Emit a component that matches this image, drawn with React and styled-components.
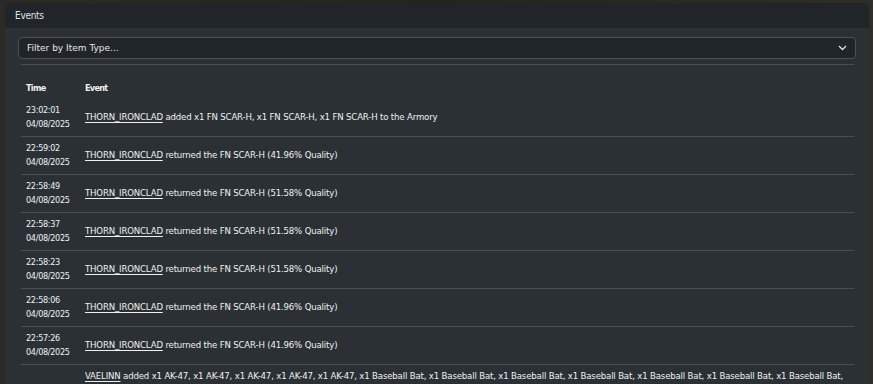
import React from "react";
import styled, { createGlobalStyle } from "styled-components";

const GlobalStyle = createGlobalStyle`
  html, body {
    margin: 0;
    padding: 0;
    height: 384px;
    overflow: hidden;
    background: #2a2a26;
  }
  body {
    font-family: "DejaVu Sans Condensed", "DejaVu Sans", sans-serif;
    font-stretch: condensed;
    color: #eef0f2;
  }
`;

const Page = styled.div`
  height: 384px;
  box-sizing: border-box;
  padding: 3px 4px 0 5px;
  background: linear-gradient(90deg, #2b2a25 0%, #24241f 50%, #2e2d28 100%);
`;

const Panel = styled.section`
  height: 100%;
  display: flex;
  flex-direction: column;
  background: #2b3035;
  border-radius: 6px 6px 0 0;
  overflow: hidden;
`;

const PanelHeader = styled.header`
  flex: 0 0 25px;
  display: flex;
  align-items: center;
  padding: 0 10px;
  background: #212529;
  font-size: 10px;
  letter-spacing: -0.3px;
  color: #dfe2e5;
`;

const PanelBody = styled.div`
  padding: 9px 13px 0 13px;
`;

const Select = styled.div`
  height: 22px;
  box-sizing: border-box;
  display: flex;
  align-items: center;
  justify-content: space-between;
  padding: 0 8px 0 8px;
  background: #212529;
  border: 1px solid #4b5056;
  border-radius: 4px;
  font-family: "DejaVu Sans", sans-serif;
  font-stretch: normal;
  font-size: 9px;
  color: #e3e6e9;
`;

const Table = styled.div`
  margin: 5px 2px 0 3px;
  border-top: 1px solid #4a4f55;
`;

const Row = styled.div`
  display: grid;
  grid-template-columns: 59px 1fr;
  align-items: center;
  border-bottom: ${(p) => (p.$head ? "none" : "1px solid #4a4f55")};
  padding: ${(p) => (p.$head ? "16px 0 4px" : "4px 0 5px")};
`;

const HeadCell = styled.div`
  padding-left: 5px;
  font-size: 9px;
  font-weight: bold;
  line-height: 14px;
  letter-spacing: -0.7px;
`;

const TimeCell = styled.div`
  padding-left: 5px;
  font-size: 9px;
  line-height: 14px;
  letter-spacing: -0.3px;
`;

const EventCell = styled.div`
  padding-left: 5px;
  padding-right: 8px;
  font-size: 9.5px;
  line-height: 14px;
  letter-spacing: -0.15px;
`;

const User = styled.a`
  color: #eef0f2;
  text-decoration: underline;
  text-underline-offset: 2px;
`;

const longText =
  " added x1 AK-47, x1 AK-47, x1 AK-47, x1 AK-47, x1 AK-47, x1 Baseball Bat, x1 Baseball Bat, x1 Baseball Bat, x1 Baseball Bat, x1 Baseball Bat, x1 Baseball Bat, x1 Baseball Bat, x1 Baseball Bat, x1 Baseball Bat, x1 Baseball Bat, x1 Baseball Bat, x1 Baseball Bat, x1 Baseball Bat, x1 Baseball Bat, x1 Baseball Bat, x1 Glock 17, x1 Glock 17, x1 Glock 17, x1 Glock 17, x1 Glock 17, x1 Glock 17, x1 Glock 17, x1 Glock 17, x1 Knife, x1 Knife, x1 Knife, x1 Knife, x1 Knife, x1 Knife, x1 Knife, x1 Knife, x1 Knife, x1 Knife, x1 Knife, x1 Knife, x1 Bandage, x1 Bandage, x1 Bandage, x1 Bandage, x1 Bandage, x1 Bandage, x1 Bandage, x1 Bandage, x1 Bandage, x1 Bandage, x1 Bandage, x1 Bandage, x1 Bandage, x1 Bandage, x1 Bandage, x1 Bandage, x1 Radio, x1 Radio, x1 Radio, x1 Radio, x1 Radio, x1 Radio, x1 Radio, x1 Radio, x1 Radio, x1 Radio, x1 Radio, x1 Radio to the Armory";

const events = [
  { time: "23:02:01", date: "04/08/2025", user: "THORN_IRONCLAD", text: " added x1 FN SCAR-H, x1 FN SCAR-H, x1 FN SCAR-H to the Armory" },
  { time: "22:59:02", date: "04/08/2025", user: "THORN_IRONCLAD", text: " returned the FN SCAR-H (41.96% Quality)" },
  { time: "22:58:49", date: "04/08/2025", user: "THORN_IRONCLAD", text: " returned the FN SCAR-H (51.58% Quality)" },
  { time: "22:58:37", date: "04/08/2025", user: "THORN_IRONCLAD", text: " returned the FN SCAR-H (51.58% Quality)" },
  { time: "22:58:23", date: "04/08/2025", user: "THORN_IRONCLAD", text: " returned the FN SCAR-H (51.58% Quality)" },
  { time: "22:58:06", date: "04/08/2025", user: "THORN_IRONCLAD", text: " returned the FN SCAR-H (41.96% Quality)" },
  { time: "22:57:26", date: "04/08/2025", user: "THORN_IRONCLAD", text: " returned the FN SCAR-H (41.96% Quality)" },
  { time: "22:55:10", date: "04/08/2025", user: "VAELINN", text: longText },
];

function Chevron() {
  return (
    <svg width="9" height="6" viewBox="0 0 9 6" fill="none">
      <polyline points="1,1 4.5,4.5 8,1" stroke="#dfe2e5" strokeWidth="1.3" />
    </svg>
  );
}

export default function App() {
  return (
    <>
      <GlobalStyle />
      <Page>
        <Panel>
          <PanelHeader>Events</PanelHeader>
          <PanelBody>
            <Select>
              <span>Filter by Item Type...</span>
              <Chevron />
            </Select>
            <Table>
              <Row $head>
                <HeadCell>Time</HeadCell>
                <HeadCell>Event</HeadCell>
              </Row>
              {events.map((e, i) => (
                <Row key={i}>
                  <TimeCell>
                    {e.time}
                    <br />
                    {e.date}
                  </TimeCell>
                  <EventCell>
                    <User>{e.user}</User>
                    {e.text}
                  </EventCell>
                </Row>
              ))}
            </Table>
          </PanelBody>
        </Panel>
      </Page>
    </>
  );
}
